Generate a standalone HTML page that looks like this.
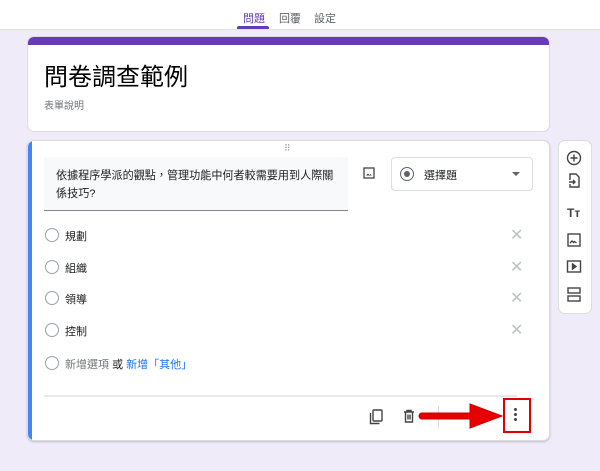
<!DOCTYPE html><html><head><meta charset="utf-8"><style>
*{box-sizing:border-box;margin:0;padding:0}
body{width:600px;height:471px;background:#f0ebf8;font-family:"Liberation Sans","Noto Sans CJK TC",sans-serif;position:relative;overflow:hidden;color:#202124}
.a{position:absolute}
.top{left:0;top:0;width:600px;height:30px;background:#fff;border-bottom:1px solid #e0e0e0}
.tab{top:10px;font-size:11px;color:#5f6368}
.card{background:#fff;border-radius:7px;border:1px solid #dadce0}
.radio{width:14px;height:14px;border:1.5px solid #9aa0a6;border-radius:50%}
.opt{font-size:11px;color:#202124}
.x{font-size:16px;color:#bdc1c6;font-weight:300}
</style></head><body>
<div class="a top"></div>
<div class="a tab" style="left:243px;color:#673ab7">問題</div>
<div class="a" style="left:237px;top:26px;width:32px;height:3px;background:#673ab7;border-radius:2px 2px 0 0"></div>
<div class="a tab" style="left:279px">回覆</div>
<div class="a tab" style="left:314px">設定</div>

<div class="a card" style="left:27px;top:36px;width:523px;height:96px;overflow:hidden">
<div class="a" style="left:0;top:0;width:100%;height:8px;background:#673ab7"></div>
<div class="a" style="left:16px;top:20px;font-size:24px;color:#000">問卷調查範例</div>
<div class="a" style="left:16px;top:60px;font-size:10px;color:#70757a">表單說明</div>
</div>

<div class="a card" style="left:27px;top:140px;width:523px;height:301px;overflow:hidden;box-shadow:0 1px 2px rgba(0,0,0,.2)">
<div class="a" style="left:0;top:0;width:4px;height:100%;background:#4285f4"></div>
<div class="a" style="left:256px;top:2px;font-size:9px;color:#9aa0a6;letter-spacing:-1px">⠿</div>
<div class="a" style="left:16px;top:16px;width:304px;height:54px;background:#f8f9fa;border-bottom:1px solid #80868b"></div>
<div class="a" style="left:28px;top:26px;font-size:11.1px;line-height:18px;white-space:nowrap">依據程序學派的觀點，管理功能中何者較需要用到人際關<br>係技巧?</div>
<svg class="a" style="left:335px;top:26px" width="12" height="12" viewBox="0 0 12 12"><rect x="1" y="1" width="10" height="10" fill="none" stroke="#444" stroke-width="1.3"/><path d="M3 8.5l2-2 1.5 1.5 1-1 1.5 1.5z" fill="#444"/></svg>
<div class="a" style="left:363px;top:16px;width:142px;height:34px;border:1px solid #dadce0;border-radius:4px"></div>
<div class="a" style="left:372px;top:26px;width:14px;height:14px;border:1.6px solid #5f6368;border-radius:50%"></div>
<div class="a" style="left:376px;top:30px;width:6px;height:6px;background:#5f6368;border-radius:50%"></div>
<div class="a" style="left:396px;top:26px;font-size:11px">選擇題</div>
<div class="a" style="left:484px;top:31px;border-left:4px solid transparent;border-right:4px solid transparent;border-top:4px solid #5f6368"></div>

<div class="a radio" style="left:17px;top:87px"></div><div class="a opt" style="left:37px;top:87px">規劃</div><div class="a x" style="left:482px;top:84px">✕</div>
<div class="a radio" style="left:17px;top:119px"></div><div class="a opt" style="left:37px;top:119px">組織</div><div class="a x" style="left:482px;top:116px">✕</div>
<div class="a radio" style="left:17px;top:150px"></div><div class="a opt" style="left:37px;top:150px">領導</div><div class="a x" style="left:482px;top:147px">✕</div>
<div class="a radio" style="left:17px;top:182px"></div><div class="a opt" style="left:37px;top:182px">控制</div><div class="a x" style="left:482px;top:179px">✕</div>
<div class="a radio" style="left:17px;top:215px"></div><div class="a opt" style="left:37px;top:215px;color:#70757a">新增選項 <span style="color:#202124">或</span> <span style="color:#1a73e8">新增「其他」</span></div>
<div class="a" style="left:16px;top:254px;width:473px;height:2px;background:#e8eaed"></div>
<svg class="a" style="left:341px;top:268px" width="14" height="16" viewBox="0 0 14 16"><rect x="4" y="1" width="9" height="11" fill="none" stroke="#444" stroke-width="1.4" rx="1"/><path d="M1.5 4v10.5h9" fill="none" stroke="#444" stroke-width="1.4"/></svg>
<svg class="a" style="left:375px;top:268px" width="12" height="14" viewBox="0 0 12 14"><path d="M1 3h10M4 3V1.5h4V3M2.5 3v10h7V3M5 5.5v5M7 5.5v5" fill="none" stroke="#444" stroke-width="1.4"/></svg>
<div class="a" style="left:410px;top:265px;width:1px;height:22px;background:#dadce0"></div>
<div class="a" style="left:486px;top:267px;width:3px;height:3px;background:#444;border-radius:50%;box-shadow:0 5px 0 #444,0 10px 0 #444"></div>
</div>
<svg class="a" style="left:416px;top:401px" width="88" height="30" viewBox="0 0 88 30"><path d="M6 12h48V3l32 12-32 12v-9H6a3 3 0 0 1 0-6z" fill="#e60000" stroke="#c00" stroke-width="1"/></svg>
<div class="a" style="left:503px;top:398px;width:28px;height:35px;border:2px solid #e00000"></div>

<div class="a card" style="left:558px;top:140px;width:34px;height:174px"></div>
<svg class="a" style="left:566px;top:150px" width="16" height="170" viewBox="0 0 16 170" fill="none" stroke="#444" stroke-width="1.4">
<circle cx="8" cy="8" r="6.5"/><path d="M8 4.5v7M4.5 8h7"/>
<path d="M4 30v-6h6l3 3v10H4v-3M3 32h6M7 30l2 2-2 2"/>
<text x="1" y="67" font-size="12" font-weight="bold" fill="#444" stroke="none" font-family="Liberation Sans">Tт</text>
<rect x="2" y="84" width="12" height="12"/><path d="M4 93l2-2 1.5 1.5 1-1 2 1.5" />
<rect x="1.5" y="111" width="13" height="11"/><path d="M6.5 114v5l3.5-2.5z" fill="#444"/>
<rect x="2" y="138" width="12" height="5"/><rect x="2" y="146" width="12" height="5"/>
</svg>
</body></html>
